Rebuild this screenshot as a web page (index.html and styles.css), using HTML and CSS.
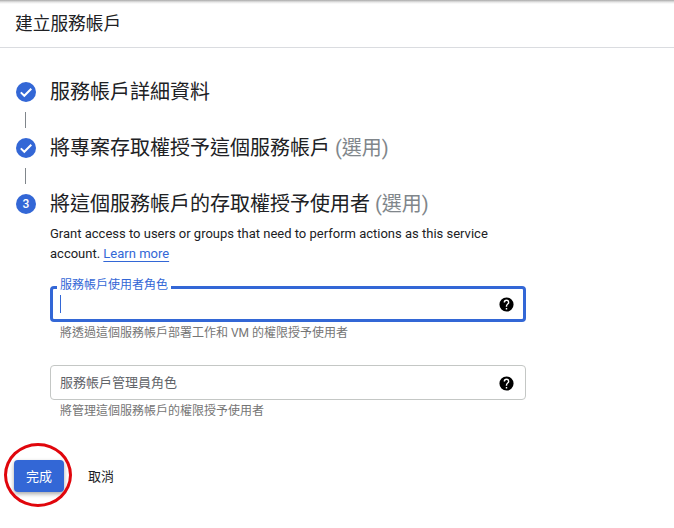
FILE: index.html
```html
<!DOCTYPE html>
<html lang="zh-Hant">
<head>
    <meta charset="UTF-8">
    <title>建立服務帳戶</title>
    <link rel="stylesheet" href="styles.css">
</head>
<body>
    <header class="page-header">
        <h1>建立服務帳戶</h1>
    </header>
    <main class="stepper">
        <div class="step">
            <svg class="step-icon" viewBox="0 0 20 20"><circle cx="10" cy="10" r="10" fill="#3367d6"/><path d="M4.8 10.4l3.5 3.4 7-7" fill="none" stroke="#fff" stroke-width="2"/></svg>
            <h2>服務帳戶詳細資料</h2>
        </div>
        <div class="connector"></div>
        <div class="step">
            <svg class="step-icon" viewBox="0 0 20 20"><circle cx="10" cy="10" r="10" fill="#3367d6"/><path d="M4.8 10.4l3.5 3.4 7-7" fill="none" stroke="#fff" stroke-width="2"/></svg>
            <h2>將專案存取權授予這個服務帳戶 <span class="optional">(選用)</span></h2>
        </div>
        <div class="connector"></div>
        <div class="step">
            <span class="step-number">3</span>
            <h2>將這個服務帳戶的存取權授予使用者 <span class="optional">(選用)</span></h2>
        </div>
        <section class="step-body">
            <p class="intro">Grant access to users or groups that need to perform actions as this service account. <a href="#">Learn more</a></p>
            <div class="field field-focused">
                <label>服務帳戶使用者角色</label>
                <span class="caret"></span>
                <svg class="help" viewBox="0 0 24 24"><path d="M12 2a10 10 0 1 0 0 20 10 10 0 0 0 0-20zm1 17h-2v-2h2v2zm2.07-7.75l-.9.92C13.45 12.9 13 13.5 13 15h-2v-.5c0-1.1.45-2.1 1.17-2.83l1.24-1.26A2 2 0 1 0 10 9H8a4 4 0 1 1 8 0c0 .88-.36 1.68-.93 2.25z"/></svg>
            </div>
            <p class="hint">將透過這個服務帳戶部署工作和 VM 的權限授予使用者</p>
            <div class="field field-idle">
                <span class="placeholder">服務帳戶管理員角色</span>
                <svg class="help" viewBox="0 0 24 24"><path d="M12 2a10 10 0 1 0 0 20 10 10 0 0 0 0-20zm1 17h-2v-2h2v2zm2.07-7.75l-.9.92C13.45 12.9 13 13.5 13 15h-2v-.5c0-1.1.45-2.1 1.17-2.83l1.24-1.26A2 2 0 1 0 10 9H8a4 4 0 1 1 8 0c0 .88-.36 1.68-.93 2.25z"/></svg>
            </div>
            <p class="hint">將管理這個服務帳戶的權限授予使用者</p>
        </section>
        <div class="actions">
            <button class="btn-done" type="button">完成</button>
            <button class="btn-cancel" type="button">取消</button>
            <span class="annotation"></span>
        </div>
    </main>
</body>
</html>
```

FILE: styles.css
```css
body {
    margin: 0;
    height: 528px;
    overflow: hidden;
    background: #fff;
    color: #202124;
    font-family: Roboto, "Noto Sans CJK TC", sans-serif;
}
.page-header {
    height: 47px;
    box-sizing: content-box;
    border-bottom: 1px solid #dadce0;
    background: linear-gradient(to bottom, #a9a9a9, #e4e4e4 2px, #fff 4px);
    display: flex;
    align-items: center;
    padding-left: 15px;
}
h1 {
    margin: 0 0 4px;
    font-size: 17.7px;
    font-weight: 400;
}
.stepper {
    padding: 32px 0 0 16px;
}
.step {
    display: flex;
    align-items: center;
    gap: 14px;
    height: 24px;
}
.step-icon, .step-number {
    width: 20px;
    height: 20px;
    flex: none;
}
.step-number {
    border-radius: 50%;
    background: #3367d6;
    color: #fff;
    font-size: 12px;
    font-weight: 500;
    line-height: 20px;
    text-align: center;
}
h2 {
    margin: 0 0 4px;
    font-size: 20px;
    font-weight: 400;
    white-space: nowrap;
}
.optional {
    color: #80868b;
}
.connector {
    width: 1px;
    height: 16px;
    margin: 8px 0 8px 9px;
    background: #80868b;
}
.step-body {
    margin-left: 34px;
    width: 476px;
}
.intro {
    margin: 8px 0 0;
    font-size: 13px;
    line-height: 20px;
}
.intro a {
    color: #3367d6;
    text-decoration: underline;
    text-underline-offset: 3px;
}
.field {
    position: relative;
    box-sizing: border-box;
    display: flex;
    align-items: center;
    justify-content: space-between;
    background: #fff;
}
.field-focused {
    height: 36px;
    margin-top: 22px;
    border: 3px solid #3367d6;
    border-radius: 4px;
    padding: 0 8px 0 7px;
}
.field-focused label {
    position: absolute;
    left: 4px;
    top: -11px;
    padding: 0 3px;
    background: #fff;
    color: #3367d6;
    font-size: 12px;
    line-height: 14px;
}
.caret {
    width: 1px;
    height: 18px;
    background: #3367d6;
}
.field-idle {
    height: 35px;
    margin-top: 24px;
    border: 1px solid #c4c7c5;
    border-radius: 4px;
    padding: 0 10px 0 9px;
}
.placeholder {
    color: #5f6368;
    font-size: 13px;
    margin-top: -2px;
}
.help {
    width: 17px;
    height: 17px;
    margin-top: 1px;
    fill: #000;
}
.hint {
    margin: 3px 0 0 10px;
    color: #757575;
    font-size: 12px;
    line-height: 16px;
}
.actions {
    position: relative;
    display: flex;
    align-items: center;
    margin: 41px 0 0 -2px;
    gap: 24px;
}
.btn-done {
    width: 50px;
    height: 32px;
    border: 0;
    border-radius: 4px;
    padding: 0 0 2px;
    background: #3367d6;
    color: #fff;
    font: inherit;
    font-size: 13px;
    box-shadow: 0 2px 4px rgba(0, 0, 0, 0.35);
}
.btn-cancel {
    border: 0;
    padding: 0 0 2px;
    background: none;
    color: #202124;
    font: inherit;
    font-size: 13px;
}
/* red circle someone drew on the screenshot */
.annotation {
    position: absolute;
    left: -10px;
    top: -17px;
    width: 62px;
    height: 58px;
    border: 3px solid #e0060c;
    border-radius: 50%;
}
```
